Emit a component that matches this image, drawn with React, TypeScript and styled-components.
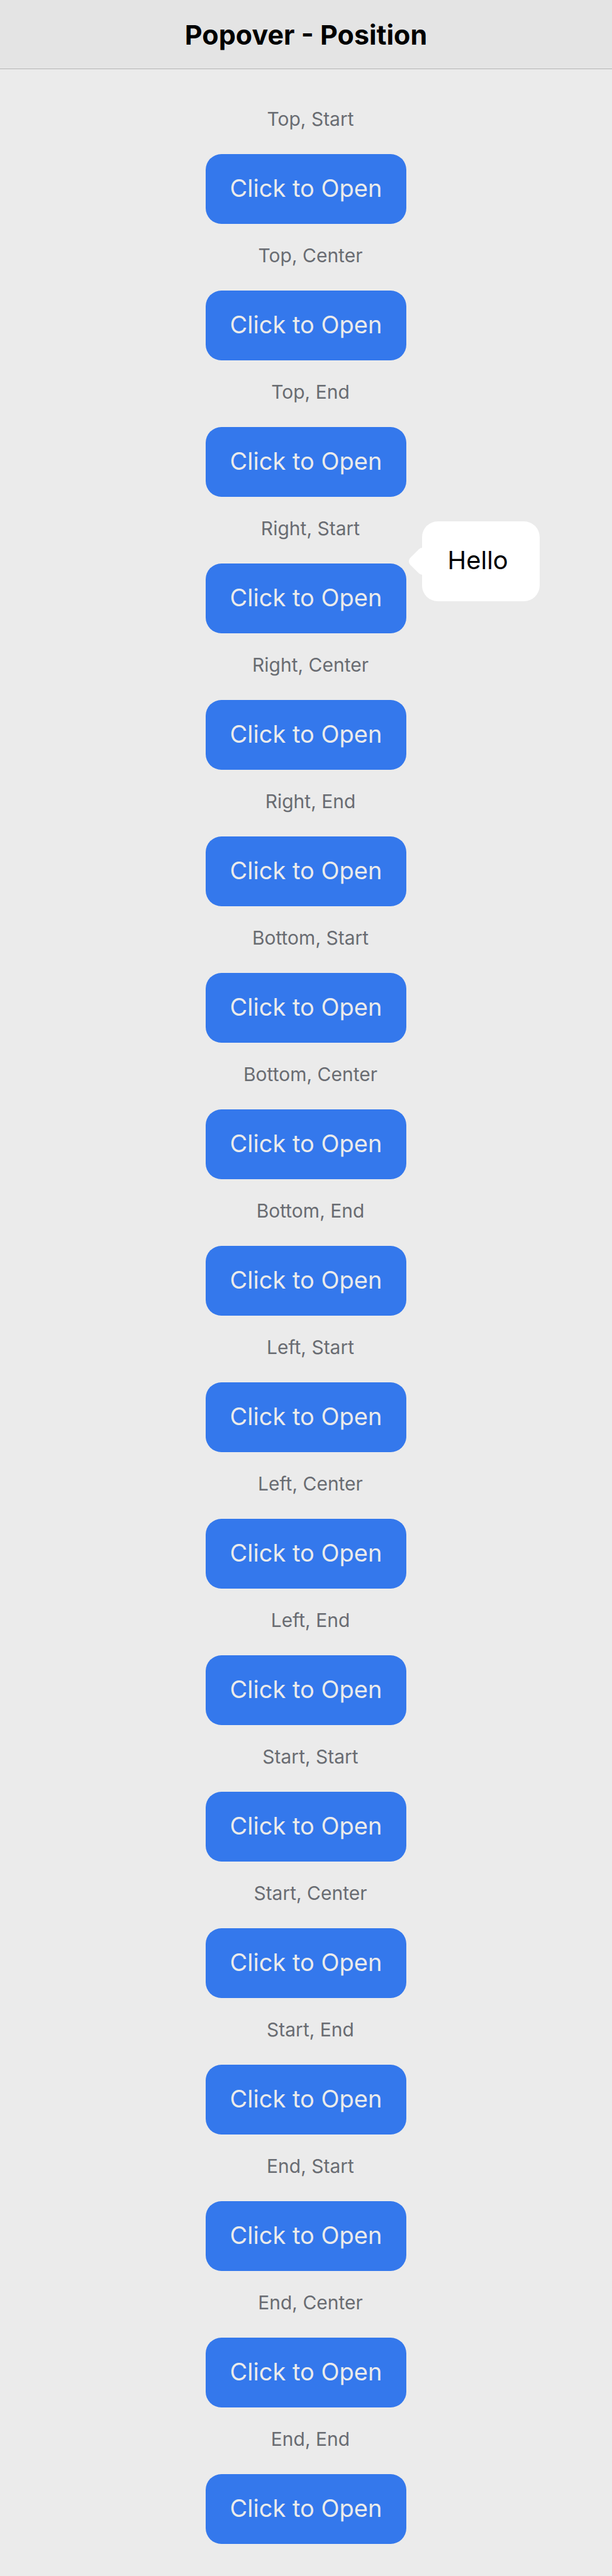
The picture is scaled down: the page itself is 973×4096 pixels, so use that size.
import React, { useState } from "react";
import styled, { createGlobalStyle, css } from "styled-components";

type Side = "Top" | "Right" | "Bottom" | "Left" | "Start" | "End";
type Align = "Start" | "Center" | "End";

const SIDES: Side[] = ["Top", "Right", "Bottom", "Left", "Start", "End"];
const ALIGNMENTS: Align[] = ["Start", "Center", "End"];

const GlobalStyle = createGlobalStyle`
  *, *::before, *::after {
    box-sizing: border-box;
  }
  body {
    margin: 0;
    background: #ebebeb;
    color: #000;
    font-family: Inter, "Liberation Sans", sans-serif;
  }
`;

const Toolbar = styled.header`
  display: flex;
  align-items: center;
  justify-content: center;
  height: 110px;
  background: #e4e4e4;
  border-bottom: 1px solid #b4b4b4;
`;

const Title = styled.h1`
  margin: 0;
  font-size: 43px;
  font-weight: 700;
  line-height: 50px;
`;

const Content = styled.main`
  display: flex;
  flex-direction: column;
  align-items: center;
  gap: 32px;
  padding: 61px 0 50px;
`;

const Item = styled.section`
  display: flex;
  flex-direction: column;
  align-items: center;
  gap: 38px;
`;

const Label = styled.h2`
  margin: 0;
  padding-left: 14px;
  color: #696c72;
  font-size: 30px;
  font-weight: 400;
  line-height: 36px;
`;

const Anchor = styled.div`
  position: relative;
`;

const OpenButton = styled.button`
  display: block;
  height: 111px;
  padding: 0 39px 3px;
  border: 0;
  border-radius: 25px;
  background: #3478ec;
  color: #ebebeb;
  font: inherit;
  font-size: 38px;
  line-height: 48px;
  white-space: nowrap;
  cursor: pointer;
`;

const onLeft = css`
  right: calc(100% + 25px);
  &::before { right: -17px; }
`;

const onRight = css`
  left: calc(100% + 25px);
  &::before { left: -17px; }
`;

const beside = css<{ $align: Align }>`
  top: ${(p) => ({ Start: -67, Center: -8, End: 51 })[p.$align]}px;
  &::before { top: 46px; }
`;

const stacked = css<{ $align: Align }>`
  left: ${(p) => ({ Start: 0, Center: 66, End: 132 })[p.$align]}px;
  &::before { left: 76px; }
`;

const above = css`
  bottom: calc(100% + 25px);
  &::before { bottom: -17px; }
`;

const below = css`
  top: calc(100% + 25px);
  &::before { top: -17px; }
`;

const placement = {
  Top: css`${above}${stacked}`,
  Bottom: css`${below}${stacked}`,
  Left: css`${onLeft}${beside}`,
  Start: css`${onLeft}${beside}`,
  Right: css`${onRight}${beside}`,
  End: css`${onRight}${beside}`,
};

const Popover = styled.div<{ $side: Side; $align: Align }>`
  position: absolute;
  z-index: 1;
  min-width: 187px;
  padding: 38px 40px 41px;
  border-radius: 25px;
  background: #fff;
  font-size: 40px;
  line-height: 48px;

  &::before {
    content: "";
    position: absolute;
    width: 35px;
    height: 35px;
    border-radius: 8px;
    background: #fff;
    transform: rotate(45deg);
  }

  ${(p) => placement[p.$side]}
`;

export default function App() {
  const [open, setOpen] = useState<string | null>("Right, Start");

  return (
    <>
      <GlobalStyle />
      <Toolbar>
        <Title>Popover - Position</Title>
      </Toolbar>
      <Content>
        {SIDES.flatMap((side) =>
          ALIGNMENTS.map((align) => {
            const name = `${side}, ${align}`;
            const isOpen = open === name;
            return (
              <Item key={name}>
                <Label>{name}</Label>
                <Anchor>
                  <OpenButton
                    type="button"
                    aria-expanded={isOpen}
                    onClick={() => setOpen(isOpen ? null : name)}
                  >
                    Click to Open
                  </OpenButton>
                  {isOpen && (
                    <Popover role="dialog" aria-label={name} $side={side} $align={align}>
                      Hello
                    </Popover>
                  )}
                </Anchor>
              </Item>
            );
          })
        )}
      </Content>
    </>
  );
}
